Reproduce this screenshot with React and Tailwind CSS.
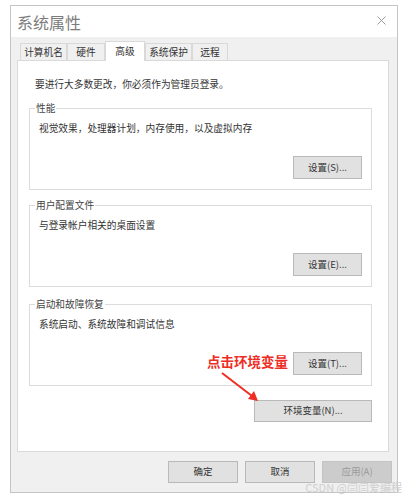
import React from 'react';

const tabs = [
  { label: '计算机名', w: 'w-[47px]' },
  { label: '硬件', w: 'w-[38px]' },
  { label: '高级', w: 'w-[40px]', active: true },
  { label: '系统保护', w: 'w-[47px]' },
  { label: '远程', w: 'w-[36px]' },
];

function Btn({ children, className = '', disabled }) {
  return (
    <div
      className={`flex items-center justify-center border text-[9.5px] leading-none ${
        disabled
          ? 'bg-[#cccccc] border-[#c4c4c4] text-[#9a9a9a]'
          : 'bg-[#e1e1e1] border-[#b9b9b9] text-[#333]'
      } ${className}`}
    >
      {children}
    </div>
  );
}

function Group({ title, text, button, className = '' }) {
  return (
    <fieldset className={`w-[343px] ml-[11px] border border-[#dcdcdc] ${className}`}>
      <legend className="ml-[5px] px-[1px] text-[9.7px] leading-[12px] text-[#444]">{title}</legend>
      <div className="pl-[9px] pr-[9px] pt-[8px] pb-[10px]">
        <div className="text-[9.7px] leading-[12px] text-[#333]">{text}</div>
        <div className="flex justify-end mt-[22px]">
          <Btn className="w-[69px] h-[23px]">{button}</Btn>
        </div>
      </div>
    </fieldset>
  );
}

export default function App() {
  return (
    <div className="relative w-[405px] h-[499px] bg-white pl-[10px] pt-[5px] font-['Noto_Sans_CJK_SC',sans-serif]">
      <div className="w-[388px] h-[488px] border border-[#c4c4c4] bg-[#f0f0f0] flex flex-col">
        <div className="h-[31px] bg-white flex items-center justify-between pl-[6px] pr-[11px]">
          <span className="text-[16px] leading-none text-[#7c7c7c]">系统属性</span>
          <svg width="9" height="9" viewBox="0 0 9 9" className="mt-[-2px]">
            <path d="M0.5 0.5 L8.5 8.5 M8.5 0.5 L0.5 8.5" stroke="#9a9a9a" strokeWidth="1" />
          </svg>
        </div>

        <div className="mt-[4px] px-[6px]">
          <div className="flex items-end h-[19px] pl-[3px]">
            {tabs.map((t) =>
              t.active ? (
                <div
                  key={t.label}
                  className={`${t.w} h-[20px] -mb-px relative z-10 bg-white border-t border-x border-[#d9d9d9] flex items-center justify-center text-[9.7px] text-[#333]`}
                >
                  {t.label}
                </div>
              ) : (
                <div
                  key={t.label}
                  className={`${t.w} h-[17px] bg-[#f0f0f0] border-t border-x border-[#d9d9d9] flex items-center justify-center text-[9.7px] text-[#333]`}
                >
                  {t.label}
                </div>
              )
            )}
          </div>

          <div className="w-[372px] h-[392px] bg-white border border-[#d9d9d9] pt-[17px]">
            <div className="pl-[17px] text-[9.7px] leading-[12px] text-[#333]">要进行大多数更改，你必须作为管理员登录。</div>
            <Group className="mt-[12px]" title="性能" text="视觉效果，处理器计划，内存使用，以及虚拟内存" button="设置(S)..." />
            <Group className="mt-[9px]" title="用户配置文件" text="与登录帐户相关的桌面设置" button="设置(E)..." />
            <Group className="mt-[11px]" title="启动和故障恢复" text="系统启动、系统故障和调试信息" button="设置(T)..." />
            <div className="w-[343px] ml-[11px] flex justify-end mt-[14px]">
              <Btn className="w-[118px] h-[22px]">环境变量(N)...</Btn>
            </div>
          </div>
        </div>

        <div className="flex justify-end gap-[7px] mt-[9px] pr-[5px]">
          <Btn className="w-[70px] h-[22px]">确定</Btn>
          <Btn className="w-[70px] h-[22px]">取消</Btn>
          <Btn className="w-[70px] h-[22px]" disabled>应用(A)</Btn>
        </div>
      </div>

      <div className="absolute left-[207px] top-[352px] text-[13.5px] leading-[18px] font-bold text-[#ee2d24]">
        点击环境变量
      </div>
      <svg className="absolute left-[215px] top-[368px]" width="50" height="40" viewBox="0 0 50 40">
        <line x1="7" y1="5" x2="37" y2="28" stroke="#ee2d24" strokeWidth="2" />
        <polygon points="43,33 33,31 39,23" fill="#ee2d24" />
      </svg>

      <div className="absolute right-[3px] top-[481px] text-[11px] leading-[13px] text-[#cfcfcf]">
        CSDN @闫闫爱编程
      </div>
    </div>
  );
}
